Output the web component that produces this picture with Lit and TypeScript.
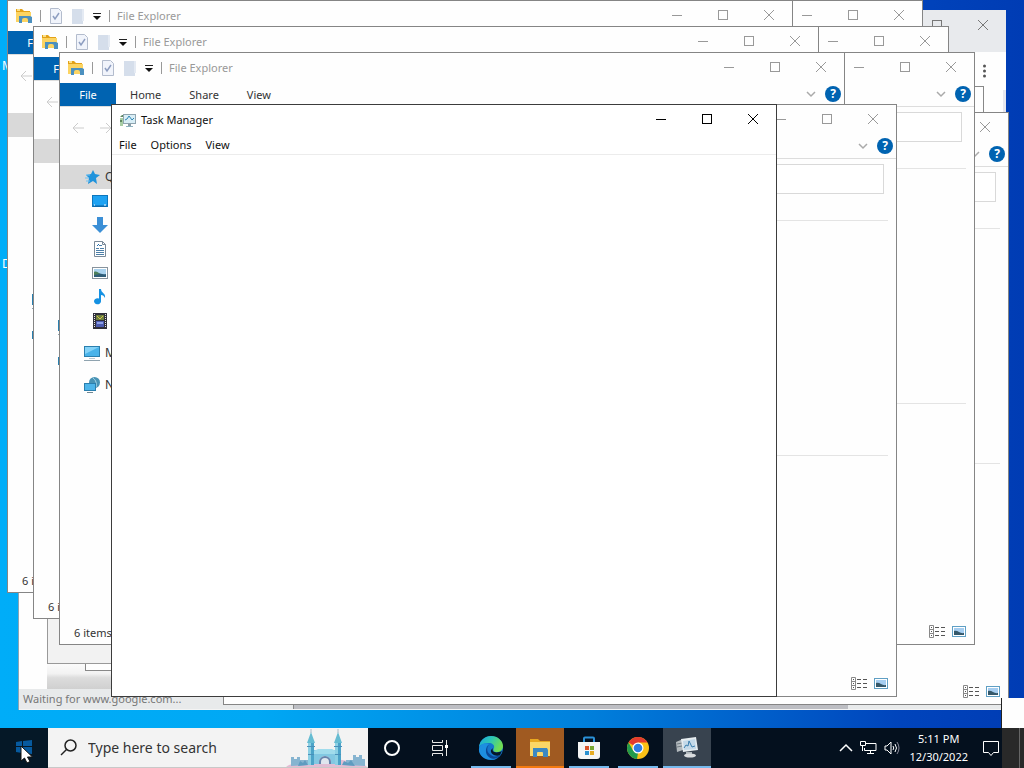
import { LitElement, html, svg, css, nothing } from "lit";
import { customElement, property } from "lit/decorators.js";
import { styleMap } from "lit/directives/style-map.js";
import { classMap } from "lit/directives/class-map.js";

const folder = html`<svg class="icon" width="18" height="18" viewBox="0 0 18 18" aria-hidden="true">
  <path d="M1 2h6l2 2h6v4H1z" fill="#e3a218"/><path d="M2 2h3v2H2z" fill="#fbe08a"/>
  <path d="M1 5h15v10H1z" fill="#fcd462"/>
  <path d="M4 9h11l2 1v6h-4v-3a2 2 0 0 0-2-2H9a2 2 0 0 0-2 2v3H4z" fill="#4b90bf"/>
</svg>`;

const minimizeIcon = html`<svg width="12" height="12" viewBox="0 0 12 12" aria-hidden="true"><path d="M1 6.5h10" stroke="currentColor"/></svg>`;
const maximizeIcon = html`<svg width="12" height="12" viewBox="0 0 12 12" aria-hidden="true"><rect x="1.5" y="1.5" width="9" height="9" fill="none" stroke="currentColor"/></svg>`;
const closeIcon = html`<svg width="12" height="12" viewBox="0 0 12 12" aria-hidden="true"><path d="M1 1l10 10M11 1L1 11" fill="none" stroke="currentColor"/></svg>`;

const captionButtons = html`<div class="caption">
  <button type="button" aria-label="Minimize">${minimizeIcon}</button>
  <button type="button" aria-label="Maximize">${maximizeIcon}</button>
  <button type="button" aria-label="Close">${closeIcon}</button>
</div>`;

const monitorGraph = html`<svg width="16" height="16" viewBox="0 0 16 16" aria-hidden="true">
  <path d="M0 6h3v8H0z" fill="#a8cda4"/><path d="M0 5l2-2h2v2zM0 8h2v2H0z" fill="#5f8862"/>
  <rect x="3.5" y="2.5" width="12" height="9" fill="#d9eef6" stroke="#8fa5b0"/>
  <path d="M5 8l2-1 2-3 3 4 2-2" fill="none" stroke="#2f86b5"/>
  <path d="M8 12h3v2H8z" fill="#8a9ba5"/><path d="M6 14h7v1H6z" fill="#8fb3c0"/>
</svg>`;

const base = css`
  * { box-sizing: border-box; }
  button { font: inherit; color: inherit; background: none; border: 0; padding: 0; margin: 0; }
  svg { display: block; flex: none; }
  .caption { display: flex; align-self: flex-start; margin-left: auto; height: 28px; }
  .caption button { width: 46px; display: flex; align-items: center; justify-content: center; }
`;

/* Icons of the navigation pane */
const glyphs: Record<string, unknown> = {
  star: svg`<path d="M9 1l2 4 5 1-4 3 1 6-4-3-5 3 1-6-3-3 5-1z" fill="#1f93dc"/><path d="M2 6h4M1 9h4M2 12h4" stroke="#6fc1f2"/>`,
  desktop: svg`<rect x=".5" y="2.5" width="15" height="11" fill="#1ea2f2" stroke="#0c76bd"/><path d="M1 13h14" stroke="#0a5f9e"/><path d="M2 12h1M12 12h2" stroke="#fff"/>`,
  down: svg`<path d="M5 0h6v8h5l-8 8-8-8h5z" fill="#3b8fd6"/>`,
  doc: svg`<path d="M2.5.5h8l3 3v12h-11z" fill="#fff" stroke="#7a8a99"/><path d="M10.5.5v3h3" fill="none" stroke="#7a8a99"/><path d="M7 4.5h3M4 7.5h3M8 7.5h4M4 9.5h8M4 11.5h8M4 13.5h8" stroke="#4d7fa8"/><path d="M5 5l2-2" stroke="#1f6fb0"/>`,
  picture: svg`<rect x=".5" y="2.5" width="15" height="11" fill="#fff" stroke="#87939d"/><path d="M2 4h12v8H2z" fill="#a9d2ee"/><path d="M2 8c4-1 8 2 12 1v3H2z" fill="#2f5d78"/><path d="M2 7c2-1 4 0 6 2l-6 1z" fill="#4c7f5a"/>`,
  music: svg`<path d="M7 0h2c0 4 5 4 4 9-1-2-2-3-4-3v6.500a3.500 3 0 1 1-2-3z" fill="#1591e2"/>`,
  video: svg`<path d="M1 0h14v16H1z" fill="#30303a"/><path d="M2.5 1v14M13.5 1v14" stroke="#e8e8e8" stroke-dasharray="1 1"/><path d="M4 2h8v5H4z" fill="#6d7f3f"/><path d="M5 3l3 3 3-3" stroke="#d6c548" fill="none"/><path d="M4 8h8v6H4z" fill="#4d5bb0"/><path d="M5 9h6v2H5z" fill="#8da0e8"/>`,
  pc: svg`<rect x=".5" y="1.5" width="15" height="10" fill="#49b3ea" stroke="#2a7fae"/><path d="M1 2h14L1 9z" fill="#84d2f7"/><path d="M0 15.5h16" stroke="#8fa3af"/><path d="M5 13.5h6" stroke="#b8c9d2"/>`,
  network: svg`<circle cx="10.5" cy="5.5" r="5.5" fill="#4893b5"/><path d="M9 1c3 2 4 6 3 9" stroke="#a8d8ea" fill="none"/><rect x=".5" y="6.5" width="11" height="7" fill="#4db5ea" stroke="#2a7fae"/><path d="M3 15.5h6" stroke="#6f8894"/>`,
};

const places = [
  { icon: "star", label: "Quick access", top: true, selected: true },
  { icon: "desktop", label: "Desktop" },
  { icon: "down", label: "Downloads" },
  { icon: "doc", label: "Documents" },
  { icon: "picture", label: "Pictures" },
  { icon: "music", label: "Music" },
  { icon: "video", label: "Videos" },
  { icon: "pc", label: "My PC", top: true, spaced: true },
  { icon: "network", label: "Network", top: true, spaced: true },
];

type Detail = "full" | "icons" | "frame";

/* "full" shows every label, "icons" leaves out the navigation labels,
   "frame" draws only the window frame and its controls. */
@customElement("explorer-window")
class ExplorerWindow extends LitElement {
  @property() detail: Detail = "full";

  static styles = [base, css`
    :host { display: flex; flex-direction: column; box-sizing: border-box; background: #fefefe; border: 1px solid #858585; color: #333; font: 11px/16px "Noto Sans", "Open Sans", sans-serif; overflow: hidden; }
    .title { display: flex; align-items: center; height: 30px; flex: none; padding-left: 7px; color: #999; }
    .rule { width: 1px; height: 12px; background: #999; }
    .quick { display: flex; align-items: center; gap: 8px; padding: 0 7px; }
    .tabs { display: flex; height: 23px; flex: none; align-items: stretch; }
    .tabs .file { width: 56px; background: #0063b1; color: #fff; }
    .tabs .tab { padding: 0 14px; }
    .end { margin-left: auto; display: flex; align-items: center; gap: 9px; height: 22px; padding-right: 3px; color: #aaa; }
    .help { width: 16px; height: 16px; border-radius: 50%; background: #0063b1; color: #fff; font-weight: 700; font-size: 12px; line-height: 16px; }
    .nav { display: flex; align-items: flex-start; height: 41px; flex: none; border-top: 1px solid #ddd; padding: 5px 12px 0 12px; color: #ccc; }
    .arrows { display: flex; gap: 16px; padding-top: 10px; }
    .search { margin-left: auto; width: 240px; height: 30px; border: 1px solid #d9d9d9; background: #fff; }
    .body { flex: 1; display: flex; min-height: 0; }
    .places { width: 180px; list-style: none; margin: 0; padding: 18px 0 0; flex: none; font-size: 12px; }
    .places li { height: 24px; display: flex; align-items: center; gap: 5px; padding-left: 32px; white-space: nowrap; }
    .places li.top { padding-left: 24px; }
    .places li.selected { background: #d9d9d9; }
    .places li.spaced { margin-top: 8px; }
    .files { flex: 1; padding: 21px 8px 0 0; }
    .group { border-top: 1px solid #e4e4e4; height: 235px; }
    .status { height: 22px; flex: none; display: flex; align-items: center; padding: 0 8px 0 14px; }
    .views { margin-left: auto; display: flex; gap: 7px; padding-bottom: 4px; }
  `];

  render() {
    const full = this.detail === "full";
    const frame = this.detail === "frame";
    return html`
      <header class="title">
        ${frame ? nothing : html`${folder}
        <div class="quick">
          <span class="rule"></span>
          <svg width="14" height="16" viewBox="0 0 14 16" aria-hidden="true"><path d="M1.5.5h8l3 3v12h-11z" fill="#f1f4fb" stroke="#b3bccd"/><path d="M4 8l2 3 4-6" fill="none" stroke="#8d9dc0" stroke-width="1.500"/></svg>
          <svg width="14" height="16" viewBox="0 0 14 16" aria-hidden="true"><path d="M1 1h11v15H1z" fill="#d5deeb"/><path d="M11 1h2v12h-2z" fill="#e4eaf3"/></svg>
          <svg width="8" height="8" viewBox="0 0 8 8" aria-hidden="true"><path d="M0 1.5h8" stroke="#222"/><path d="M0 4h8L4 8z" fill="#111"/></svg>
          <span class="rule"></span>
        </div>
        <span>File Explorer</span>`}
        ${captionButtons}
      </header>
      <nav class="tabs">
        ${frame ? nothing : html`<button type="button" class="file">File</button>`}
        ${full ? ["Home", "Share", "View"].map((t) => html`<button type="button" class="tab">${t}</button>`) : nothing}
        <div class="end">
          <svg width="10" height="8" viewBox="0 0 10 8" aria-hidden="true"><path d="M1 2l4 4 4-4" fill="none" stroke="currentColor" stroke-width="1.500"/></svg>
          <button type="button" class="help" aria-label="Help">${full || frame ? "?" : nothing}</button>
        </div>
      </nav>
      <div class="nav">
        <div class="arrows">
          <svg width="12" height="12" viewBox="0 0 12 12" aria-hidden="true"><path d="M12 6H1M6 1L1 6l5 5" fill="none" stroke="currentColor"/></svg>
          <svg width="12" height="12" viewBox="0 0 12 12" aria-hidden="true"><path d="M0 6h11M6 1l5 5-5 5" fill="none" stroke="currentColor"/></svg>
        </div>
        <input class="search" type="search" aria-label="Search">
      </div>
      <div class="body">
        <ul class="places">
          ${frame ? nothing : places.map((p) => html`<li class=${classMap({ top: !!p.top, selected: !!p.selected, spaced: !!p.spaced })}>
            <svg width="16" height="16" viewBox="0 0 16 16" aria-hidden="true">${glyphs[p.icon]}</svg>${full ? p.label : nothing}
          </li>`)}
        </ul>
        <div class="files"><div class="group"></div><div class="group"></div></div>
      </div>
      <footer class="status">
        ${frame ? nothing : html`<span>6 items</span>`}
        <div class="views">
          <svg width="16" height="13" viewBox="0 0 16 13" aria-hidden="true"><path d="M.5.5h4v12h-4zM.5 4.5h4M.5 8.5h4" fill="none" stroke="#888"/><path d="M2 2.5h1M2 6.5h1M2 10.5h1M6 2.5h4M12 2.5h4M6 6.5h4M12 6.5h4M6 10.5h4M12 10.5h4" stroke="#555"/></svg>
          <svg width="14" height="12" viewBox="0 0 14 12" aria-hidden="true"><rect x=".5" y="1.5" width="13" height="10" fill="#fff" stroke="#5f9fc4"/><path d="M2 3h10v7H2z" fill="#a5cdf0"/><path d="M2 6c4-1 6 3 10 2v2H2z" fill="#35586a"/></svg>
        </div>
      </footer>`;
  }
}

@customElement("task-manager-window")
class TaskManagerWindow extends LitElement {
  static styles = [base, css`
    :host { display: block; box-sizing: border-box; background: #fff; border: 1px solid #3c3c3c; color: #111; font: 11px/16px "Noto Sans", "Open Sans", sans-serif; }
    .title { display: flex; align-items: center; gap: 5px; height: 30px; padding-left: 8px; }
    .caption { color: #000; }
    .menu { display: flex; align-items: center; gap: 14px; height: 20px; padding-left: 7px; border-bottom: 1px solid #ececec; }
  `];
  render() {
    return html`
      <header class="title">${monitorGraph}<span>Task Manager</span>${captionButtons}</header>
      <nav class="menu">
        <button type="button">File</button><button type="button">Options</button><button type="button">View</button>
      </nav>`;
  }
}

@customElement("browser-window")
class BrowserWindow extends LitElement {
  static styles = [base, css`
    :host { display: flex; flex-direction: column; box-sizing: border-box; background: #fefefe; border-left: 1px solid #8aa4b4; color: #777; font: 11px/16px "Noto Sans", "Open Sans", sans-serif; }
    .title { display: flex; height: 42px; flex: none; background: #e8eaed; }
    .title .caption { height: 30px; }
    .tools { display: flex; justify-content: flex-end; height: 38px; flex: none; padding: 12px 19px 0 0; }
    .page { flex: 1; display: flex; flex-direction: column; justify-content: flex-end; border-right: 3px solid #e6e7ee; }
    .shade { height: 28px; margin-left: 28px; background: linear-gradient(#fefefe, #f2f2f2 45%, #dcdcdc 60%, #d0d0d0); }
    .foot { display: flex; height: 21px; flex: none; background: #e8eaeb; border-bottom: 1px solid #f4f4f4; }
    .waiting { width: 274px; padding: 2px 4px 0; white-space: nowrap; }
    .scroll { flex: 1; display: flex; align-items: flex-end; }
    .thumb { width: 555px; height: 4px; background: #bdbec3; border-left: 1px solid #888; }
  `];
  render() {
    return html`
      <header class="title">${captionButtons}</header>
      <div class="tools"><svg width="5" height="14" viewBox="0 0 5 14" aria-hidden="true"><g fill="#555"><circle cx="2.5" cy="2" r="1.500"/><circle cx="2.5" cy="7" r="1.500"/><circle cx="2.5" cy="12" r="1.500"/></g></svg></div>
      <div class="page"><div class="shade"></div></div>
      <footer class="foot"><div class="waiting">Waiting for www.google.com...</div><div class="scroll"><div class="thumb"></div></div></footer>`;
  }
}

@customElement("task-bar")
class TaskBar extends LitElement {
  static styles = [base, css`
    :host { display: flex; height: 40px; flex: none; background: #04101e; color: #fff; font: 11px/18px "Noto Sans", "Open Sans", sans-serif; }
    button { display: flex; align-items: center; justify-content: center; }
    .start { width: 48px; background: #051827; }
    .search { display: flex; align-items: center; gap: 11px; width: 320px; background: #f3f3f3; padding-left: 12px; border-bottom: 1px solid #c8c8c8; }
    .search input { flex: 1; min-width: 0; border: 0; background: none; outline: 0; padding: 0; font: 14px/20px "Noto Sans", "Open Sans", sans-serif; color: #333; }
    .search input::placeholder { color: #333; opacity: 1; }
    .castle { align-self: flex-end; }
    .tool { width: 48px; }
    .apps { display: flex; gap: 1px; padding-left: 3px; }
    .app { width: 48px; padding-top: 2px; border-bottom: 2px solid transparent; }
    .run { background: linear-gradient(#76b9ed, #76b9ed) center 38px / 40px 2px no-repeat border-box; }
    .alert { background: #a05a21; border-bottom-color: #f47a10; }
    .active { background: #38434f; border-bottom-color: #76b9ed; }
    .tray { display: flex; align-items: center; gap: 7px; margin-left: auto; }
    .clock { text-align: center; padding: 0 5px 0 2px; }
    .edge { width: 22px; background: linear-gradient(#666, #666) 17px 0 / 1px 100% no-repeat #292929; }
    .note { width: 22px; }
  `];
  render() {
    return html`
      <button type="button" class="start" aria-label="Start"><svg width="20" height="20" viewBox="0 0 20 20" aria-hidden="true"><path d="M2 4l6-1v5H2zM9 3l9-1v6H9zM2 9h6v6l-6-1zM9 9h9v7l-9-1z" fill="#075a9f"/></svg></button>
      <label class="search">
        <svg width="17" height="18" viewBox="0 0 17 18" aria-hidden="true"><circle cx="10.5" cy="6.5" r="5.5" fill="none" stroke="#222" stroke-width="1.500"/><path d="M6.5 10.5L1 16" stroke="#222" stroke-width="1.500"/></svg>
        <input type="text" aria-label="Search" placeholder="Type here to search">
        <svg class="castle" width="82" height="38" viewBox="0 0 82 38" aria-hidden="true">
          <path d="M0 38c4-4 12-3 18-4 12-5 40-5 50 0 6 0 10 1 13 4z" fill="#e2bdd3"/>
          <path d="M5 37v-9h3v2h3v-2h3v3h8v5zM60 36v-5h7v-5h3v2h3v-2h3v4h3v7z" fill="#86b4d0"/>
          <path d="M27 35V21h24v14h-6v-2a6 6 0 0 0-12 0v2z" fill="#82c8e2"/>
          <path d="M28 22l4-2h14l4 2v3H28z" fill="#a1dcec"/>
          <path d="M22 36V14h6v22zM49 36V14h6v22z" fill="#4ba3c8"/><path d="M22 14h3v22h-3zM49 14h3v22h-3z" fill="#8cd0e4"/>
          <path d="M21 14L25 3l4 11zM48 14l4-11 4 11z" fill="#66bcd2"/><path d="M21 17.5h8M48 17.5h8M22 25.5h6M49 25.5h6" stroke="#4a90ba"/>
          <path d="M25 0v4M52 0v4" stroke="#a9b8c8"/>
          <path d="M34 35v-2a5 5 0 0 1 10 0v2" fill="#dfe6ee" stroke="#6683ac" stroke-width="2"/>
          <path d="M12 37l2-5 3 2 2-3 3 5zM56 36l2-4 4 2 3-3 4 6z" fill="#5f9cc0"/>
        </svg>
      </label>
      <button type="button" class="tool" aria-label="Cortana"><svg width="18" height="18" viewBox="0 0 18 18" aria-hidden="true"><circle cx="9" cy="9" r="7" fill="none" stroke="#fff" stroke-width="2"/></svg></button>
      <button type="button" class="tool" aria-label="Task view"><svg width="18" height="16" viewBox="0 0 18 16" aria-hidden="true"><path d="M1.5 0v2.500h10V0M1.5 16v-2.500h10V16M1.5 5.500h10v5h-10zM15.500 0v16" fill="none" stroke="#e8e8e8"/><path d="M14 5h3v3h-3z" fill="#fff"/></svg></button>
      <div class="apps">
        <button type="button" class="app run" aria-label="Microsoft Edge"><svg width="26" height="26" viewBox="0 0 26 26" aria-hidden="true">
          <defs><linearGradient id="eg" x1="0" y1="0" x2="1" y2=".4"><stop offset="0" stop-color="#1aa5df"/><stop offset=".5" stop-color="#2cc6b5"/><stop offset="1" stop-color="#70dd52"/></linearGradient></defs>
          <circle cx="13" cy="13" r="12" fill="#1476cc"/>
          <path d="M1 12C2 5 7 1 13 1c7 0 12 5 12 10 0 4-3 6-6 6-4 0-4-2-3-4 1-3-2-5-5-5-5 0-9 2-10 4z" fill="url(#eg)"/>
          <path d="M1 14c1-5 6-7 10-5-4 2-4 9 1 13 2 2 5 2 8 1-9 5-20-1-19-9z" fill="#1d8fe0"/>
          <path d="M11 10c-3 3-2 8 2 10 4 3 8 1 10-1-3 6-11 6-14 1-2-4-1-8 2-10z" fill="#0b4796"/>
          <path d="M15 13c-2 4 3 6 9 3l-2 4c-4 2-10-1-9-5z" fill="#061829"/>
        </svg></button>
        <button type="button" class="app alert" aria-label="File Explorer"><svg width="24" height="22" viewBox="0 0 24 22" aria-hidden="true"><path d="M2 2h8l2 2h10v6H2z" fill="#e9a81f"/><path d="M2 5h20v14H2z" fill="#fcd766"/><path d="M5 11h14l1 2v7h-5v-4a1 1 0 0 0-1-1h-4a1 1 0 0 0-1 1v4H5z" fill="#3c88c0"/></svg></button>
        <button type="button" class="app run" aria-label="Microsoft Store"><svg width="24" height="24" viewBox="0 0 24 24" aria-hidden="true"><path d="M7 7V2.500Q7 1.500 8 1.500h8q1 0 1 1V7" fill="none" stroke="#2a91d8" stroke-width="2"/><path d="M1 6h22v14a3 3 0 0 1-3 3H4a3 3 0 0 1-3-3z" fill="#f5f5f5"/><path d="M8 10h4v4H8z" fill="#d9542b"/><path d="M13 10h4v4h-4z" fill="#79a832"/><path d="M8 15h4v4H8z" fill="#2c91d0"/><path d="M13 15h4v4h-4z" fill="#e8ad24"/></svg></button>
        <button type="button" class="app run" aria-label="Google Chrome"><svg width="24" height="24" viewBox="0 0 24 24" aria-hidden="true"><circle cx="12" cy="12" r="11" fill="#fbc116"/><path d="M12 12L2.500 6.500A11 11 0 0 1 21.500 6.500H12z" fill="#e33b2e"/><path d="M2.500 6.500L7.200 14.700 12 17 11 23A11 11 0 0 1 2.500 6.500z" fill="#229a4b"/><circle cx="12" cy="12" r="5.500" fill="#fff"/><circle cx="12" cy="12" r="4.300" fill="#2f7de1"/></svg></button>
        <button type="button" class="app active" aria-label="Task Manager"><svg width="26" height="24" viewBox="0 0 26 24" aria-hidden="true"><path d="M2 6l7-3v11l-6 2z" fill="#b3babe"/><path d="M3 8l5-1M3 11l5-1" stroke="#727d83"/><path d="M7 3l15-2 2 13-15 2z" fill="#e6ecef"/><path d="M9 5l12-2 1 10-12 1z" fill="#c4d9e8"/><path d="M10 12l2-3 2 1 1-5 3 6 3-1" fill="none" stroke="#3c7fae"/><path d="M12 16h6v3h-6z" fill="#aeb6ba"/><ellipse cx="16" cy="19.500" rx="6" ry="2" fill="#d9dcde"/></svg></button>
      </div>
      <div class="tray">
        <svg width="14" height="14" viewBox="0 0 14 14" aria-hidden="true"><path d="M1 10l6-6 6 6" fill="none" stroke="#fff" stroke-width="1.500"/></svg>
        <svg width="17" height="16" viewBox="0 0 17 16" aria-hidden="true"><path d="M5 3.500h11v7H4.500V8M10.500 11v3M7 13.500h7M.5 1.500h5v4h-5zM2.500 6v5" fill="none" stroke="#fff"/></svg>
        <svg width="16" height="14" viewBox="0 0 16 14" aria-hidden="true"><path d="M1 5h2l4-4v12L3 9H1z" fill="none" stroke="#fff"/><path d="M9 5q1.500 2 0 4M11 3q3 4 0 8" fill="none" stroke="#fff"/><path d="M13 1q4 6 0 12" fill="none" stroke="#889"/></svg>
        <div class="clock"><div>5:11 PM</div><div>12/30/2022</div></div>
        <button type="button" class="note" aria-label="Notifications"><svg width="18" height="18" viewBox="0 0 18 18" aria-hidden="true"><path d="M1.500 2.500h15v11h-5l-2.500 3-2.500-3h-5z" fill="none" stroke="#fff"/></svg></button>
      </div>
      <div class="edge"></div>`;
  }
}

type Box = { left: number; top: number; width: number; height: number };
const place = (b: Box) => styleMap({ left: `${b.left}px`, top: `${b.top}px`, width: `${b.width}px`, height: `${b.height}px` });

const size = { width: 786, height: 593 };
const explorers: (Box & { detail: Detail })[] = [
  { left: 223, top: 112, ...size, detail: "frame" },
  { left: 137, top: 0, ...size, detail: "frame" },
  { left: 7, top: 0, ...size, detail: "icons" },
  { left: 163, top: 26, ...size, detail: "frame" },
  { left: 33, top: 26, ...size, detail: "icons" },
  { left: 189, top: 52, ...size, detail: "frame" },
  { left: 59, top: 52, ...size, detail: "full" },
  { left: 111, top: 104, ...size, detail: "frame" },
];

@customElement("app-root")
class AppRoot extends LitElement {
  static styles = [base, css`
    :host { display: flex; flex-direction: column; height: 100vh; overflow: hidden; font: 12px/16px "Noto Sans", "Open Sans", sans-serif; }
    .desktop { position: relative; flex: 1; min-height: 0; overflow: hidden; background: linear-gradient(90deg, #00adf8 0, #00a8f4 25%, #0080dc 57%, #0044bc 88%, #003cb4 100%); }
    .shortcuts { display: flex; flex-direction: column; gap: 182px; padding: 58px 0 0 2px; color: #fff; }
    .window { position: absolute; }
    .panel { background: #f2f2f2; border: 1px solid #999; }
    .blank { background: #fefefe; border: 1px solid #888; }
    .corner { position: absolute; right: 0; bottom: 0; width: 23px; height: 30px; background: #fefefe; border-left: 1px solid #222; }
    .pointer { position: absolute; left: 20px; bottom: 4px; pointer-events: none; }
  `];
  render() {
    return html`
      <main class="desktop">
        <div class="shortcuts"><span>M</span><span>D</span></div>
        <browser-window class="window" style=${place({ left: 18, top: 10, width: 988, height: 700 })}></browser-window>
        <div class="window blank" style=${place({ left: 85, top: 86, width: 899, height: 585 })}></div>
        <div class="window panel" style=${place({ left: 47, top: 120, width: 600, height: 544 })}></div>
        ${explorers.map((b) => html`<explorer-window class="window" detail=${b.detail} style=${place(b)}></explorer-window>`)}
        <task-manager-window class="window" style=${place({ left: 111, top: 104, width: 666, height: 593 })}></task-manager-window>
        <div class="corner"></div>
      </main>
      <task-bar></task-bar>
      <svg class="pointer" width="13" height="19" viewBox="0 0 13 19" aria-hidden="true"><path d="M1 1v15l3.500-3 2.500 5 3-1.500-2.500-4.500h5z" fill="#fff" stroke="#111"/></svg>`;
  }
}
